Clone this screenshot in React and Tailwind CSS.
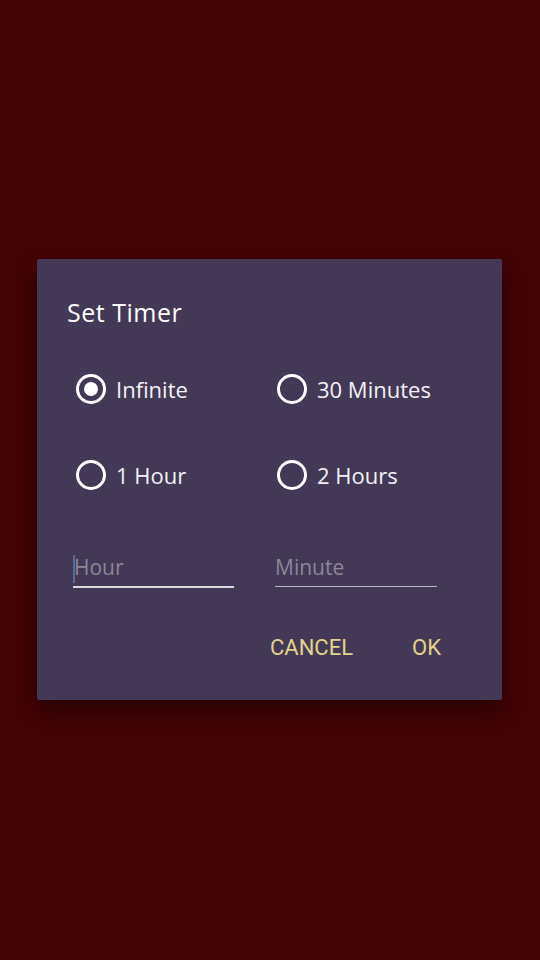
import React, { useState } from "react";

function Radio({ checked, label, onClick }) {
  return (
    <button onClick={onClick} className="flex items-center h-[48px] gap-[10px] text-left">
      <span className="w-[30px] h-[30px] rounded-full border-[3px] border-white flex items-center justify-center shrink-0">
        {checked && <span className="w-[14px] h-[14px] rounded-full bg-white" />}
      </span>
      <span className="text-[22px] font-normal text-[#f4f2f6] leading-none">{label}</span>
    </button>
  );
}

export default function App() {
  const [sel, setSel] = useState("Infinite");
  const opts = ["Infinite", "30 Minutes", "1 Hour", "2 Hours"];
  return (
    <div
      className="w-[540px] h-[960px] bg-[#440305] flex items-center justify-center"
      style={{ fontFamily: "'Open Sans', 'Liberation Sans', sans-serif" }}
    >
      <div className="w-[465px] h-[441px] mr-[1px] mb-[1px] bg-[#433856] rounded-[2px] shadow-[0_10px_24px_rgba(0,0,0,0.45)] flex flex-col">
        <div className="pl-[30px] pt-[38px] text-[25px] leading-[30px] tracking-[0.5px] text-white">Set Timer</div>
        <div className="grid grid-cols-[201px_201px] gap-y-[38px] pl-[39px] mt-[38px]">
          {opts.map((o) => (
            <Radio key={o} label={o} checked={sel === o} onClick={() => setSel(o)} />
          ))}
        </div>
        <div className="flex pl-[36px] gap-[41px] mt-[55px]">
          <div className="relative w-[161px] h-[34px] border-b-2 border-[#dcd8e0]">
            <span className="absolute left-0 top-[1px] w-[2px] h-[28px] bg-[#5a6a9a]" />
            <span className="absolute left-[1px] top-[3px] text-[21px] font-normal leading-none text-[#8d8796]">Hour</span>
          </div>
          <div className="relative w-[162px] h-[33px] border-b border-[#bdb8c4]">
            <span className="absolute left-0 top-[3px] text-[21px] font-normal leading-none text-[#8d8796]">Minute</span>
          </div>
        </div>
        <div className="flex justify-end items-center pr-[61px] mt-[49px] gap-[59px]">
          <button className="text-[22px] leading-none text-[#e3d38c]" style={{ fontFamily: "Roboto, sans-serif" }}>CANCEL</button>
          <button className="text-[22px] leading-none text-[#e3d38c]" style={{ fontFamily: "Roboto, sans-serif" }}>OK</button>
        </div>
      </div>
    </div>
  );
}
